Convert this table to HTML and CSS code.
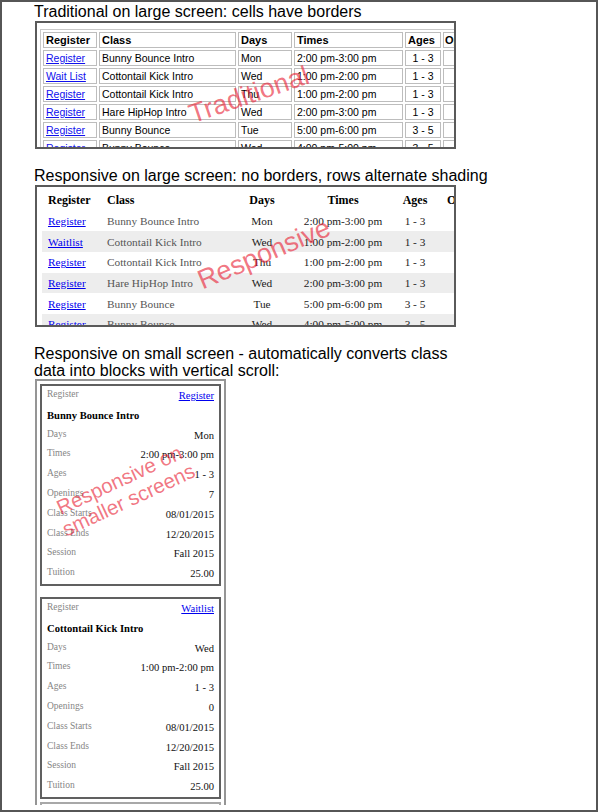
FILE: index.html
```html
<!DOCTYPE html>
<html lang="en">
<head>
<meta charset="utf-8">
<title>Class schedule layouts</title>
<link rel="stylesheet" href="styles.css">
</head>
<body>
<div class="page">
  <section class="demo">
    <h2 class="caption">Traditional on large screen: cells have borders</h2>
    <div class="frame frame-classic">
      <table class="classic">
        <colgroup>
          <col class="c-reg"><col class="c-class"><col class="c-days"><col class="c-times"><col class="c-ages"><col class="c-open">
        </colgroup>
        <thead>
          <tr><th>Register</th><th>Class</th><th>Days</th><th>Times</th><th>Ages</th><th>Openings</th></tr>
        </thead>
        <tbody>
          <tr><td><a href="#">Register</a></td><td>Bunny Bounce Intro</td><td>Mon</td><td>2:00 pm-3:00 pm</td><td class="mid">1 - 3</td><td class="mid">7</td></tr>
          <tr><td><a href="#">Wait List</a></td><td>Cottontail Kick Intro</td><td>Wed</td><td>1:00 pm-2:00 pm</td><td class="mid">1 - 3</td><td class="mid">0</td></tr>
          <tr><td><a href="#">Register</a></td><td>Cottontail Kick Intro</td><td>Thu</td><td>1:00 pm-2:00 pm</td><td class="mid">1 - 3</td><td class="mid">4</td></tr>
          <tr><td><a href="#">Register</a></td><td>Hare HipHop Intro</td><td>Wed</td><td>2:00 pm-3:00 pm</td><td class="mid">1 - 3</td><td class="mid">5</td></tr>
          <tr><td><a href="#">Register</a></td><td>Bunny Bounce</td><td>Tue</td><td>5:00 pm-6:00 pm</td><td class="mid">3 - 5</td><td class="mid">6</td></tr>
          <tr><td><a href="#">Register</a></td><td>Bunny Bounce</td><td>Wed</td><td>4:00 pm-5:00 pm</td><td class="mid">3 - 5</td><td class="mid">3</td></tr>
        </tbody>
      </table>
      <span class="stamp stamp-classic">Traditional</span>
    </div>
  </section>

  <section class="demo">
    <h2 class="caption">Responsive on large screen: no borders, rows alternate shading</h2>
    <div class="frame frame-resp">
      <table class="resp">
        <colgroup>
          <col class="r-reg"><col class="r-class"><col class="r-days"><col class="r-times"><col class="r-ages"><col class="r-open">
        </colgroup>
        <thead>
          <tr><th class="left">Register</th><th class="left">Class</th><th>Days</th><th class="times">Times</th><th>Ages</th><th class="open">Openings</th></tr>
        </thead>
        <tbody>
          <tr><td class="left"><a href="#">Register</a></td><td class="left cls">Bunny Bounce Intro</td><td>Mon</td><td class="times">2:00 pm-3:00 pm</td><td>1 - 3</td><td class="open-val">7</td></tr>
          <tr><td class="left"><a href="#">Waitlist</a></td><td class="left cls">Cottontail Kick Intro</td><td>Wed</td><td class="times">1:00 pm-2:00 pm</td><td>1 - 3</td><td class="open-val">0</td></tr>
          <tr><td class="left"><a href="#">Register</a></td><td class="left cls">Cottontail Kick Intro</td><td>Thu</td><td class="times">1:00 pm-2:00 pm</td><td>1 - 3</td><td class="open-val">4</td></tr>
          <tr><td class="left"><a href="#">Register</a></td><td class="left cls">Hare HipHop Intro</td><td>Wed</td><td class="times">2:00 pm-3:00 pm</td><td>1 - 3</td><td class="open-val">5</td></tr>
          <tr><td class="left"><a href="#">Register</a></td><td class="left cls">Bunny Bounce</td><td>Tue</td><td class="times">5:00 pm-6:00 pm</td><td>3 - 5</td><td class="open-val">6</td></tr>
          <tr><td class="left"><a href="#">Register</a></td><td class="left cls">Bunny Bounce</td><td>Wed</td><td class="times">4:00 pm-5:00 pm</td><td>3 - 5</td><td class="open-val">3</td></tr>
        </tbody>
      </table>
      <span class="stamp stamp-resp">Responsive</span>
    </div>
  </section>

  <section class="demo">
    <h2 class="caption caption-tight">Responsive on small screen - automatically converts class<br>data into blocks with vertical scroll:</h2>
    <div class="frame-mobile">
      <div class="card">
        <div class="field"><span class="label">Register</span><a class="value" href="#">Register</a></div>
        <div class="card-title">Bunny Bounce Intro</div>
        <div class="field"><span class="label">Days</span><span class="value">Mon</span></div>
        <div class="field"><span class="label">Times</span><span class="value">2:00 pm-3:00 pm</span></div>
        <div class="field"><span class="label">Ages</span><span class="value">1 - 3</span></div>
        <div class="field"><span class="label">Openings</span><span class="value">7</span></div>
        <div class="field"><span class="label">Class Starts</span><span class="value">08/01/2015</span></div>
        <div class="field"><span class="label">Class Ends</span><span class="value">12/20/2015</span></div>
        <div class="field"><span class="label">Session</span><span class="value">Fall 2015</span></div>
        <div class="field"><span class="label">Tuition</span><span class="value">25.00</span></div>
        <span class="stamp stamp-mobile">Responsive on<br>smaller screens</span>
      </div>
      <div class="card">
        <div class="field"><span class="label">Register</span><a class="value" href="#">Waitlist</a></div>
        <div class="card-title">Cottontail Kick Intro</div>
        <div class="field"><span class="label">Days</span><span class="value">Wed</span></div>
        <div class="field"><span class="label">Times</span><span class="value">1:00 pm-2:00 pm</span></div>
        <div class="field"><span class="label">Ages</span><span class="value">1 - 3</span></div>
        <div class="field"><span class="label">Openings</span><span class="value">0</span></div>
        <div class="field"><span class="label">Class Starts</span><span class="value">08/01/2015</span></div>
        <div class="field"><span class="label">Class Ends</span><span class="value">12/20/2015</span></div>
        <div class="field"><span class="label">Session</span><span class="value">Fall 2015</span></div>
        <div class="field"><span class="label">Tuition</span><span class="value">25.00</span></div>
      </div>
      <div class="card card-stub">
        <div class="field"><span class="label">Register</span><a class="value" href="#">Register</a></div>
        <div class="card-title">Cottontail Kick Intro</div>
      </div>
    </div>
  </section>
</div>
</body>
</html>
```

FILE: styles.css
```css
* { box-sizing: border-box; }

html, body {
  margin: 0;
  padding: 0;
  background: #fff;
}

.page {
  width: 598px;
  height: 812px;
  border: 2px solid #565656;
  padding: 1px 0 0 32px;
  overflow: hidden;
  background: #fff;
  display: flex;
  flex-direction: column;
  gap: 18px;
}

.demo {
  display: flex;
  flex-direction: column;
}

.caption {
  margin: 0;
  font-family: "Liberation Sans", Arial, sans-serif;
  font-weight: 400;
  font-size: 16px;
  line-height: 18px;
  color: #000;
  white-space: nowrap;
}

.caption-tight { line-height: 17px; }

.frame {
  position: relative;
  margin-left: 1px;
  width: 421px;
  border: 2px solid #5a5a5a;
  overflow: hidden;
  background: #fff;
}

.frame-classic {
  height: 128px;
  padding: 6px 0 0 3px;
}

.frame-resp {
  height: 142px;
  padding: 3px 0 0 5px;
}

/* ---- traditional table ---- */
.classic {
  table-layout: fixed;
  width: 466px;
  border: 1px solid #c9c9c9;
  border-spacing: 2px;
  font-family: "Liberation Sans", Arial, sans-serif;
  font-size: 10.5px;
  color: #000;
}

.classic .c-reg { width: 54px; }
.classic .c-class { width: 137px; }
.classic .c-days { width: 54px; }
.classic .c-times { width: 109px; }
.classic .c-ages { width: 36px; }
.classic .c-open { width: 60px; }

.classic th,
.classic td {
  height: 16px;
  padding: 0 2px;
  border: 1px solid #bdbdbd;
  text-align: left;
  vertical-align: middle;
  line-height: 14px;
  white-space: nowrap;
  overflow: hidden;
}

.classic th {
  font-weight: 700;
  font-size: 11px;
}

.classic th:last-child { padding-left: 1px; }

.classic .mid { text-align: center; }

.classic a { color: #1010ee; }

/* ---- responsive wide table ---- */
.resp {
  table-layout: fixed;
  width: 460px;
  border-collapse: collapse;
  font-family: "Liberation Serif", "Times New Roman", serif;
  font-size: 11.3px;
  color: #1a1a1a;
}

.resp .r-reg { width: 59px; }
.resp .r-class { width: 140px; }
.resp .r-days { width: 42px; }
.resp .r-times { width: 115px; }
.resp .r-ages { width: 34px; }
.resp .r-open { width: 70px; }

.resp tr { height: 20.7px; }

.resp th,
.resp td {
  padding: 0;
  text-align: center;
  vertical-align: middle;
  white-space: nowrap;
  line-height: 14px;
}

.resp th {
  font-weight: 700;
  font-size: 12px;
  color: #000;
}

.resp .left {
  text-align: left;
  padding-left: 6px;
}

.resp .times { padding-left: 5px; }

.resp .open {
  text-align: left;
  padding-left: 15px;
}

.resp .open-val {
  text-align: center;
  padding-left: 15px;
}

.resp .cls { color: #555; }

.resp tbody tr:nth-child(even) { background: #ededed; }

.resp a { color: #0000ee; }

/* ---- mobile blocks ---- */
.frame-mobile {
  margin-left: 1px;
  width: 191px;
  height: 426px;
  border: 2px solid #959595;
  border-bottom: none;
  padding: 3px 3px 0;
  overflow: hidden;
  background: #fff;
}

.card {
  position: relative;
  border: 2px solid #606060;
  padding: 0 5px;
  margin-bottom: 11px;
  font-family: "Liberation Serif", "Times New Roman", serif;
}

.card-stub {
  margin-top: -8px;
  border-color: #a8a8a8;
}

.field {
  display: flex;
  justify-content: space-between;
  align-items: flex-start;
  height: 19.8px;
}

.label {
  font-size: 9.5px;
  line-height: 16.5px;
  color: #858585;
}

.value {
  font-size: 10.6px;
  line-height: 19.8px;
  color: #111;
}

a.value { color: #0000ee; }

.card-title {
  height: 19.8px;
  font-size: 10.6px;
  line-height: 19.8px;
  font-weight: 700;
  color: #000;
}

/* ---- watermarks ---- */
.stamp {
  position: absolute;
  font-family: "Liberation Sans", Arial, sans-serif;
  color: rgba(232, 28, 50, 0.62);
  line-height: 1;
  white-space: nowrap;
  pointer-events: none;
  transform: translate(-50%, -50%) rotate(-19deg);
}

.stamp-classic {
  left: 212px;
  top: 72px;
  font-size: 27px;
}

.stamp-resp {
  left: 227px;
  top: 67px;
  font-size: 27px;
  transform: translate(-50%, -50%) rotate(-23deg);
}

.stamp-mobile {
  left: 82px;
  top: 104px;
  font-size: 20.5px;
  line-height: 22px;
  text-align: center;
  transform: translate(-50%, -50%) rotate(-25deg);
}
```
